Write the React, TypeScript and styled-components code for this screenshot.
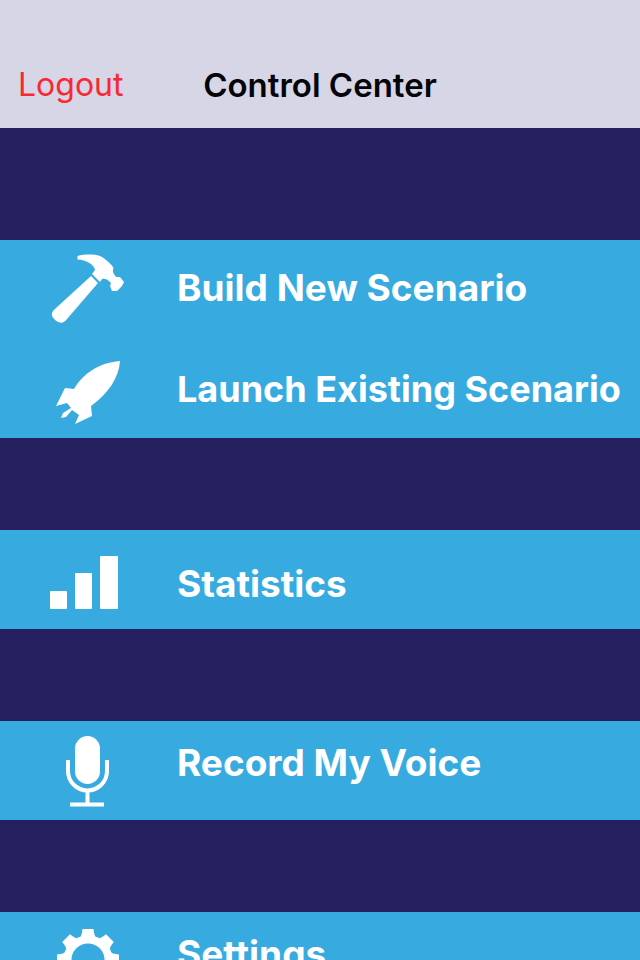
import React from "react";
import styled, { createGlobalStyle } from "styled-components";

const GlobalStyle = createGlobalStyle`
  html, body { margin: 0; background: #251f60; }
  body { font-family: Inter, "Liberation Sans", sans-serif; }
  * { box-sizing: border-box; }
`;

const Screen = styled.div`
  display: flex;
  flex-direction: column;
  height: 100vh;
  background: #251f60;
`;

const NavBar = styled.header`
  display: grid;
  grid-template-columns: 1fr auto 1fr;
  align-items: center;
  flex: none;
  padding: 41px 18px 0;
  height: 128px;
  background: #d7d6e7;
`;

const LogoutButton = styled.button`
  justify-self: start;
  padding: 0;
  border: 0;
  background: none;
  color: #fb2731;
  font: 400 32px/40px Inter, "Liberation Sans", sans-serif;
  cursor: pointer;
`;

const Title = styled.h1`
  margin: 0;
  color: #050508;
  font-size: 33px;
  line-height: 40px;
  font-weight: 600;
  white-space: nowrap;
`;

const Menu = styled.nav`
  display: flex;
  flex: 1;
  flex-direction: column;
  gap: 92px;
  min-height: 0;
  padding-top: 112px;
  overflow: hidden auto;
  scrollbar-width: none;
`;

const Group = styled.div`
  flex: none;
  background: #37abdf;
`;

const Row = styled.button`
  display: flex;
  align-items: center;
  width: 100%;
  height: 99px;
  padding: 0 0 0 40px;
  border: 0;
  background: none;
  color: #fff;
  text-align: left;
  cursor: pointer;
`;

const Icon = styled.svg.attrs({ viewBox: "0 1 96 98", "aria-hidden": true })`
  display: block;
  flex: none;
  width: 96px;
  height: 98px;
`;

const labelPadding = {
  center: "0",
  raised: "0 0 4px",
  high: "0 0 16px",
  low: "8px 0 0",
};

const Label = styled.span<{ $place?: keyof typeof labelPadding; $compact?: boolean }>`
  padding: ${({ $place = "center" }) => labelPadding[$place]};
  margin-left: 41px;
  font: 700 ${({ $compact }) => ($compact ? 36 : 37)}px/44px Inter, "Liberation Sans", sans-serif;
  white-space: nowrap;
`;

const Hammer = () => (
  <Icon fill="#fff">
    <path d="M37.500 16 C46 14 56 14 62 17 C68 21 72 25 73.500 28 C72 32 74 35 76.500 37 L80 37 L84 42 L82 46 L77 51 L72 51 L70 46 L71 43 C68 39 64 38 62 39 L60 42 L52 34 L55 30 C54 24 46 20 37.500 19.500 Z" />
    <path d="M51 36 L58 43 L27 79 Q22 86 15 80 Q8 74 16 68 Z" />
  </Icon>
);

const Rocket = () => (
  <Icon fill="#fff">
    <path d="M80 22 C79 38 69 54 51 67 L52 77 L35 85 L39 76 L32 71 L26 78 L21 79 L23 74 L31 69 L27 64 L16 67 L25 49 L34 50 C43 35 58 24 80 22 Z" />
  </Icon>
);

const Bars = () => (
  <Icon fill="#fff">
    <rect x="10" y="61" width="17" height="18" rx="1" />
    <rect x="35" y="43" width="17" height="36" rx="1" />
    <rect x="60" y="26" width="18" height="53" rx="1" />
  </Icon>
);

const Microphone = () => (
  <Icon>
    <rect x="35" y="15" width="25" height="48" rx="12.500" fill="#fff" />
    <path d="M28 39 V50 A19.500 19.500 0 0 0 67 50 V39 M47.500 69 V83 M30 83.500 H64" fill="none" stroke="#fff" strokeWidth="4" />
  </Icon>
);

const Gear = () => (
  <Icon>
    <circle cx="48" cy="48" r="20.500" fill="none" stroke="#fff" strokeWidth="8" />
    {[0, 45, 90, 135, 180, 225, 270, 315].map((angle) => (
      <path key={angle} d="M39 27 Q42 24 42.500 17 H53.500 Q54 24 57 27 Z" fill="#fff" transform={`rotate(${angle} 48 48)`} />
    ))}
  </Icon>
);

export default function App() {
  return (
    <>
      <GlobalStyle />
      <Screen>
        <NavBar>
          <LogoutButton type="button">Logout</LogoutButton>
          <Title>Control Center</Title>
        </NavBar>
        <Menu aria-label="Control Center">
          <Group>
            <Row type="button"><Hammer /><Label $place="raised">Build New Scenario</Label></Row>
            <Row type="button"><Rocket /><Label $compact>Launch Existing Scenario</Label></Row>
          </Group>
          <Group>
            <Row type="button"><Bars /><Label $place="low">Statistics</Label></Row>
          </Group>
          <Group>
            <Row type="button"><Microphone /><Label $place="high">Record My Voice</Label></Row>
          </Group>
          <Group>
            <Row type="button"><Gear /><Label $place="high">Settings</Label></Row>
          </Group>
        </Menu>
      </Screen>
    </>
  );
}
